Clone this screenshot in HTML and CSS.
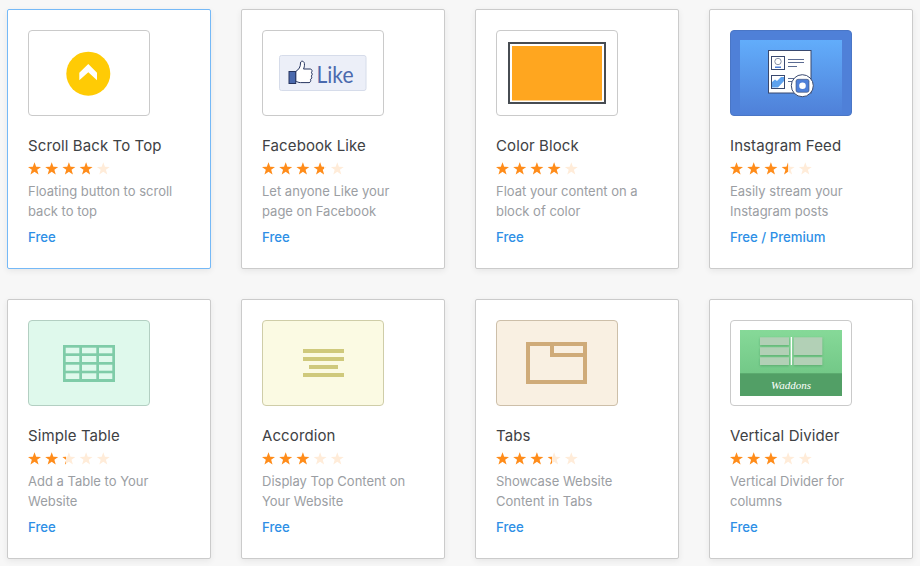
FILE: index.html
```html
<!DOCTYPE html>
<html lang="en">
<head>
<meta charset="utf-8">
<title>Add-ons</title>
<link rel="stylesheet" href="styles.css">
</head>
<body>
<svg class="defs" width="0" height="0" aria-hidden="true">
  <defs>
    <polygon id="star" points="6.5,.2 8.12,4.78 12.97,4.9 9.12,7.85 10.5,12.5 6.5,9.75 2.5,12.5 3.88,7.85 .03,4.9 4.88,4.78"/>
    <symbol id="stars" viewBox="0 0 83 14">
      <use href="#star"/>
      <use href="#star" x="17.2"/>
      <use href="#star" x="34.4"/>
      <use href="#star" x="51.6"/>
      <use href="#star" x="68.8"/>
    </symbol>
    <linearGradient id="ig-sky" x1="0" y1="0" x2="0" y2="1">
      <stop offset="0" stop-color="#62adfb"/>
      <stop offset="1" stop-color="#4f80d8"/>
    </linearGradient>
    <linearGradient id="vd-sky" x1="0" y1="0" x2="0" y2="1">
      <stop offset="0" stop-color="#86d998"/>
      <stop offset="1" stop-color="#69c07f"/>
    </linearGradient>
    <filter id="panel-shadow" x="-10%" y="-20%" width="120%" height="150%">
      <feDropShadow dx="0" dy="1" stdDeviation="1" flood-color="#3d8a52" flood-opacity=".5"/>
    </filter>
  </defs>
</svg>
<main class="grid">

  <article class="card card-active">
    <div class="thumb">
      <svg class="art" viewBox="0 0 120 84">
        <circle cx="59.3" cy="42.7" r="22" fill="#ffcb05"/>
        <polygon points="59.3,33 68,41.7 68,49.3 59.3,41.3 50.3,49.3 50.3,41.7" fill="#fff"/>
      </svg>
    </div>
    <h2 class="title">Scroll Back To Top</h2>
    <div class="rating">
      <svg class="stars stars-off"><use href="#stars"/></svg>
      <div class="rating-on" style="width:68px"><svg class="stars"><use href="#stars"/></svg></div>
    </div>
    <p class="desc">Floating button to scroll back to top</p>
    <div class="price">Free</div>
  </article>

  <article class="card">
    <div class="thumb">
      <svg class="art" viewBox="0 0 120 84">
        <rect x="16.5" y="24.5" width="86.5" height="35" rx="2" fill="#eceff8" stroke="#d6dcea"/>
        <path d="M32.7 40.5 C36 38.5 37.5 36 37.5 32 C37.5 29.5 41 29.5 41.4 32.5 C41.7 35 41 37 40.5 38 L47 38 C49.5 38 49.5 41 48 41.5 C49.8 42 49.6 44.6 48 45 C49.3 45.8 49 48 47.4 48.4 C48.2 49.4 47.6 51.6 46 51.6 L37.5 51.6 C35 51.6 34.5 50.5 32.7 50.5 Z" fill="#fff" stroke="#26355f" stroke-width="1"/>
        <rect x="26" y="40.5" width="6.7" height="12" fill="#4a69ad" stroke="#26355f"/>
        <text class="like" x="53.5" y="51.5" textLength="37" lengthAdjust="spacingAndGlyphs">Like</text>
      </svg>
    </div>
    <h2 class="title">Facebook Like</h2>
    <div class="rating">
      <svg class="stars stars-off"><use href="#stars"/></svg>
      <div class="rating-on" style="width:62px"><svg class="stars"><use href="#stars"/></svg></div>
    </div>
    <p class="desc">Let anyone Like your page on Facebook</p>
    <div class="price">Free</div>
  </article>

  <article class="card">
    <div class="thumb">
      <svg class="art" viewBox="0 0 120 84">
        <rect x="12" y="12" width="96" height="60" fill="#fff" stroke="#474c52" stroke-width="2"/>
        <rect x="15" y="15" width="90" height="54.5" fill="#ffa61f"/>
      </svg>
    </div>
    <h2 class="title">Color Block</h2>
    <div class="rating">
      <svg class="stars stars-off"><use href="#stars"/></svg>
      <div class="rating-on" style="width:68px"><svg class="stars"><use href="#stars"/></svg></div>
    </div>
    <p class="desc">Float your content on a block of color</p>
    <div class="price">Free</div>
  </article>

  <article class="card">
    <div class="thumb thumb-instagram">
      <svg class="art" viewBox="0 0 120 84">
        <rect x="9" y="9" width="102" height="75" fill="url(#ig-sky)"/>
        <rect x="37.5" y="19.5" width="42.5" height="42.5" fill="#fff" stroke="#39496f"/>
        <rect x="40.5" y="25.5" width="13" height="13" fill="#fff" stroke="#39496f"/>
        <circle cx="47" cy="30.5" r="3.2" fill="none" stroke="#8a93a8"/>
        <rect x="44" y="35.5" width="6" height="1.5" fill="#4f80d8"/>
        <rect x="57" y="28" width="16" height="1" fill="#5b6b92"/>
        <rect x="57" y="31" width="16" height="1" fill="#5b6b92"/>
        <rect x="57" y="35" width="9" height="1" fill="#5b6b92"/>
        <rect x="40.5" y="44.5" width="13" height="13" fill="#fff" stroke="#39496f"/>
        <path d="M41 56.5 V51 L44 48.5 L46 50 L50 46 L53 46 V50 L47 56.5 Z" fill="#5ea2ee"/>
        <rect x="57" y="47" width="6" height="1" fill="#5b6b92"/>
        <rect x="57" y="50" width="6" height="1" fill="#5b6b92"/>
        <circle cx="71.3" cy="54.7" r="11" fill="#fff" stroke="#39496f"/>
        <rect x="65" y="48.3" width="13" height="13" rx="2" fill="#4f80d8" stroke="#39496f" stroke-width=".6"/>
        <circle cx="71.5" cy="54.8" r="3.3" fill="#fff"/>
      </svg>
    </div>
    <h2 class="title">Instagram Feed</h2>
    <div class="rating">
      <svg class="stars stars-off"><use href="#stars"/></svg>
      <div class="rating-on" style="width:58px"><svg class="stars"><use href="#stars"/></svg></div>
    </div>
    <p class="desc">Easily stream your Instagram posts</p>
    <div class="price">Free / Premium</div>
  </article>

  <article class="card">
    <div class="thumb thumb-table">
      <svg class="art" viewBox="0 0 120 84">
        <rect x="34" y="24" width="52" height="37" fill="#7fcca8"/>
        <g fill="#dff9ec">
          <rect x="36.7" y="26.7" width="13.6" height="5.6"/><rect x="53" y="26.7" width="14.3" height="5.6"/><rect x="70" y="26.7" width="13.3" height="5.6"/>
          <rect x="36.7" y="35" width="13.6" height="6"/><rect x="53" y="35" width="14.3" height="6"/><rect x="70" y="35" width="13.3" height="6"/>
          <rect x="36.7" y="43.7" width="13.6" height="6"/><rect x="53" y="43.7" width="14.3" height="6"/><rect x="70" y="43.7" width="13.3" height="6"/>
          <rect x="36.7" y="52.3" width="13.6" height="5.7"/><rect x="53" y="52.3" width="14.3" height="5.7"/><rect x="70" y="52.3" width="13.3" height="5.7"/>
        </g>
      </svg>
    </div>
    <h2 class="title">Simple Table</h2>
    <div class="rating">
      <svg class="stars stars-off"><use href="#stars"/></svg>
      <div class="rating-on" style="width:38px"><svg class="stars"><use href="#stars"/></svg></div>
    </div>
    <p class="desc">Add a Table to Your Website</p>
    <div class="price">Free</div>
  </article>

  <article class="card">
    <div class="thumb thumb-accordion">
      <svg class="art" viewBox="0 0 120 84">
        <g fill="#cfc97c">
          <rect x="40" y="28" width="41" height="4"/>
          <rect x="40" y="36" width="41" height="4"/>
          <rect x="46" y="44" width="29" height="4"/>
          <rect x="40" y="52" width="41" height="4"/>
        </g>
      </svg>
    </div>
    <h2 class="title">Accordion</h2>
    <div class="rating">
      <svg class="stars stars-off"><use href="#stars"/></svg>
      <div class="rating-on" style="width:51px"><svg class="stars"><use href="#stars"/></svg></div>
    </div>
    <p class="desc">Display Top Content on Your Website</p>
    <div class="price">Free</div>
  </article>

  <article class="card">
    <div class="thumb thumb-tabs">
      <svg class="art" viewBox="0 0 120 84">
        <g fill="none" stroke="#cfab79" stroke-width="4">
          <rect x="31" y="23" width="57" height="38"/>
          <path d="M55 23 V34 H88"/>
        </g>
      </svg>
    </div>
    <h2 class="title">Tabs</h2>
    <div class="rating">
      <svg class="stars stars-off"><use href="#stars"/></svg>
      <div class="rating-on" style="width:56px"><svg class="stars"><use href="#stars"/></svg></div>
    </div>
    <p class="desc">Showcase Website Content in Tabs</p>
    <div class="price">Free</div>
  </article>

  <article class="card">
    <div class="thumb">
      <svg class="art" viewBox="0 0 120 84">
        <rect x="9" y="9" width="102" height="66" fill="url(#vd-sky)"/>
        <rect x="9" y="52.3" width="102" height="22.7" fill="#529f66"/>
        <g fill="#b2d0b6" filter="url(#panel-shadow)">
          <rect x="29" y="16.3" width="29" height="7.7"/>
          <rect x="29" y="26.3" width="29" height="7.7"/>
          <rect x="29" y="36.3" width="29" height="7.7"/>
          <rect x="62.7" y="16.3" width="28.6" height="17.7"/>
          <rect x="62.7" y="36.3" width="28.6" height="7.7"/>
        </g>
        <rect x="59.7" y="16" width="1.4" height="28" fill="#fff"/>
        <text class="waddons" x="60" y="68" text-anchor="middle">Waddons</text>
      </svg>
    </div>
    <h2 class="title">Vertical Divider</h2>
    <div class="rating">
      <svg class="stars stars-off"><use href="#stars"/></svg>
      <div class="rating-on" style="width:51px"><svg class="stars"><use href="#stars"/></svg></div>
    </div>
    <p class="desc">Vertical Divider for columns</p>
    <div class="price">Free</div>
  </article>

</main>
</body>
</html>
```

FILE: styles.css
```css
* { box-sizing: border-box; }

html, body { height: 100%; }

body {
  margin: 0;
  padding: 9px 0 0 7px;
  background: #f7f7f7;
  font-family: "Inter", "Lato", sans-serif;
  overflow: hidden;
}

.defs { display: block; height: 0; }

.grid {
  display: grid;
  grid-template-columns: repeat(4, 204px);
  grid-auto-rows: 260px;
  gap: 30px;
}

.card {
  padding: 20px;
  background: #fff;
  border: 1px solid #cbcbcb;
  border-radius: 2px;
  box-shadow: 0 2px 6px rgba(0, 0, 0, .07);
}

.card-active { border-color: #75b9f7; }

.thumb {
  width: 122px;
  height: 86px;
  background: #fff;
  border: 1px solid #cacaca;
  border-radius: 4px;
  overflow: hidden;
}

.thumb-instagram { background: #4f80d8; border-color: #4a76c6; }
.thumb-table { background: #dff9ec; border-color: #b3cfc2; }
.thumb-accordion { background: #fbfae3; border-color: #cfcda8; }
.thumb-tabs { background: #f9f0e2; border-color: #cdbfa9; }

.art { display: block; width: 120px; height: 84px; }

.like { font: 23px "Lato", sans-serif; fill: #4a69ad; }
.waddons { font: italic 11px "Liberation Serif", serif; fill: #fff; }

.title {
  margin: 20px 0 0;
  font-size: 15px;
  font-weight: 400;
  letter-spacing: .1px;
  line-height: 20px;
  color: #3e4144;
}

.rating {
  position: relative;
  width: 83px;
  height: 14px;
  margin-top: 6px;
}

.stars {
  display: block;
  width: 83px;
  height: 14px;
  fill: #ff8c1a;
}

.stars-off { fill: #ffecd9; }

.rating-on {
  position: absolute;
  top: 0;
  left: 0;
  height: 14px;
  overflow: hidden;
}

.desc {
  max-width: 152px;
  margin: 5px 0 0;
  font-size: 13px;
  line-height: 20px;
  color: #9b9ea3;
}

.price {
  margin-top: 6px;
  font-size: 13.2px;
  font-weight: 500;
  line-height: 20px;
  color: #2e8fe6;
}
```
